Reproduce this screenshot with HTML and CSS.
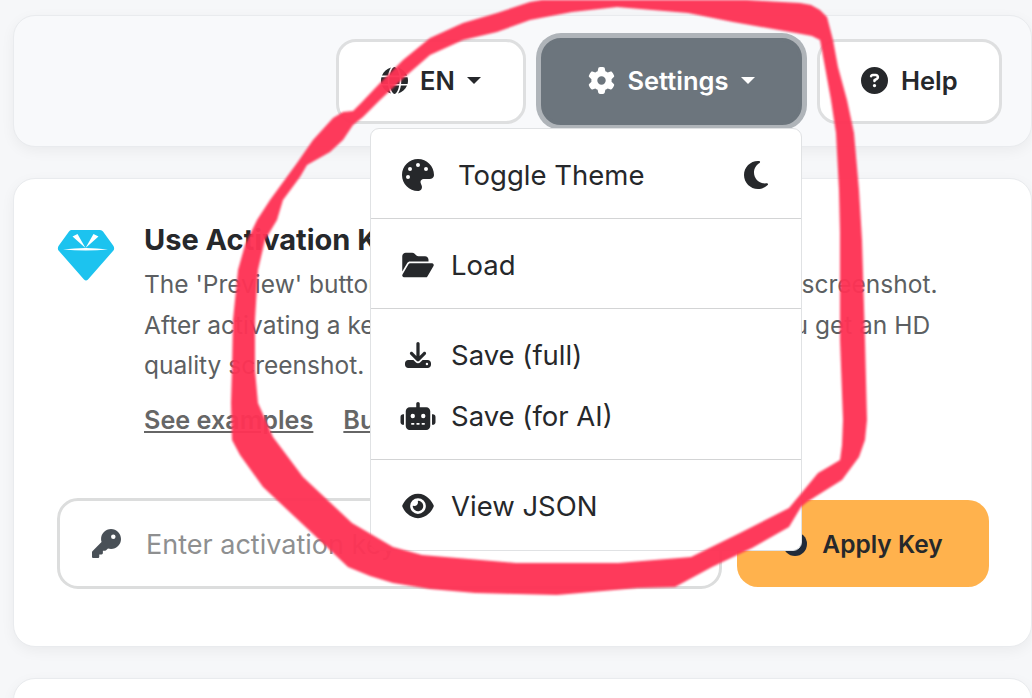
FILE: index.html
```html
<!DOCTYPE html>
<html lang="en">
<head>
<meta charset="utf-8">
<title>Settings</title>
<link rel="stylesheet" href="styles.css">
</head>
<body>
<main class="page">
  <header class="card toolbar">
    <button class="btn">
      <svg class="ico" viewBox="0 0 512 512"><path d="M352 256c0 22.2-1.2 43.6-3.3 64H163.3c-2.2-20.4-3.3-41.8-3.3-64s1.2-43.6 3.3-64H348.7c2.2 20.4 3.3 41.8 3.3 64zm28.8-64H503.9c5.3 20.5 8.1 41.9 8.1 64s-2.8 43.5-8.1 64H380.8c2.1-20.6 3.2-42 3.2-64s-1.1-43.4-3.2-64zm112.6-32H376.7c-10-63.9-29.8-117.4-55.3-151.6c78.3 20.7 142 77.5 171.9 151.6zm-149.1 0H167.7c6.1-36.4 15.5-68.6 27-94.7c10.5-23.6 22.2-40.7 33.5-51.5C239.4 3.2 248.7 0 256 0s16.6 3.2 27.8 13.8c11.3 10.8 23 27.9 33.5 51.5c11.6 26 20.9 58.2 27 94.7zm-209 0H18.6C48.6 85.9 112.2 29.1 190.6 8.4C165.1 42.6 145.3 96.1 135.3 160zM8.1 192H131.2c-2.1 20.6-3.2 42-3.2 64s1.1 43.4 3.2 64H8.1C2.8 299.5 0 278.1 0 256s2.8-43.5 8.1-64zM194.7 446.6c-11.6-26-20.9-58.2-27-94.6H344.3c-6.1 36.4-15.5 68.6-27 94.6c-10.5 23.6-22.2 40.7-33.5 51.5C272.6 508.8 263.3 512 256 512s-16.6-3.2-27.8-13.8c-11.3-10.8-23-27.9-33.5-51.5zM135.3 352c10 63.9 29.8 117.4 55.3 151.6C112.2 482.9 48.6 426.1 18.6 352H135.3zm358.1 0c-30 74.1-93.6 130.9-171.9 151.6c25.5-34.2 45.2-87.7 55.3-151.6H493.4z"/></svg>
      <span>EN</span><i class="caret"></i>
    </button>
    <div class="menu-wrap">
      <button class="btn btn-active">
        <svg class="ico" viewBox="0 0 512 512"><path d="M495.9 166.6c3.2 8.7 .5 18.4-6.4 24.6l-43.3 39.4c1.1 8.3 1.7 16.8 1.7 25.4s-.6 17.1-1.7 25.4l43.3 39.4c6.9 6.2 9.6 15.9 6.4 24.6c-4.4 11.9-9.7 23.3-15.8 34.3l-4.7 8.1c-6.6 11-14 21.4-22.1 31.2c-5.9 7.2-15.7 9.6-24.5 6.8l-55.7-17.7c-13.4 10.3-28.2 18.9-44 25.4l-12.5 57.1c-2 9.1-9 16.3-18.2 17.8c-13.8 2.3-28 3.5-42.5 3.5s-28.7-1.2-42.5-3.5c-9.2-1.5-16.2-8.7-18.2-17.8l-12.5-57.1c-15.8-6.5-30.6-15.1-44-25.4L83.1 425.9c-8.8 2.8-18.6 .3-24.5-6.8c-8.1-9.8-15.5-20.2-22.1-31.2l-4.7-8.1c-6.1-11-11.4-22.4-15.8-34.3c-3.2-8.7-.5-18.4 6.4-24.6l43.3-39.4C64.6 273.1 64 264.6 64 256s.6-17.1 1.7-25.4L22.4 191.2c-6.9-6.2-9.6-15.9-6.4-24.6c4.4-11.9 9.7-23.3 15.8-34.3l4.7-8.1c6.6-11 14-21.4 22.1-31.2c5.9-7.2 15.7-9.6 24.5-6.8l55.7 17.7c13.4-10.3 28.2-18.9 44-25.4l12.5-57.1c2-9.1 9-16.3 18.2-17.8C227.3 1.2 241.5 0 256 0s28.7 1.2 42.5 3.5c9.2 1.5 16.2 8.7 18.2 17.8l12.5 57.1c15.8 6.5 30.6 15.1 44 25.4l55.7-17.7c8.8-2.8 18.6-.3 24.5 6.8c8.1 9.8 15.5 20.2 22.1 31.2l4.7 8.1c6.1 11 11.4 22.4 15.8 34.3zM256 336a80 80 0 1 0 0-160 80 80 0 1 0 0 160z"/></svg>
        <span>Settings</span><i class="caret"></i>
      </button>
      <nav class="menu">
        <a class="item item-theme">
          <svg class="mi" viewBox="0 0 512 512"><path d="M512 256c0 .9 0 1.8 0 2.7c-.4 36.5-33.6 61.3-70.1 61.3H344c-26.5 0-48 21.5-48 48c0 3.4 .4 6.7 1 9.9c2.1 10.2 6.5 20 10.8 29.9c6.1 13.8 12.1 27.5 12.1 42c0 31.8-21.6 60.7-53.4 62c-3.5 .1-7 .2-10.6 .2C114.6 512 0 397.4 0 256S114.6 0 256 0S512 114.6 512 256zM128 288a32 32 0 1 0 -64 0 32 32 0 1 0 64 0zm0-96a32 32 0 1 0 0-64 32 32 0 1 0 0 64zM288 96a32 32 0 1 0 -64 0 32 32 0 1 0 64 0zm96 96a32 32 0 1 0 0-64 32 32 0 1 0 0 64z"/></svg>
          <span class="grow">Toggle Theme</span>
          <svg class="moon" viewBox="0 0 384 512"><path d="M223.5 32C100 32 0 132.3 0 256S100 480 223.5 480c60.6 0 115.5-24.2 155.8-63.4c5-4.9 6.3-12.5 3.1-18.7s-10.1-9.7-17-8.5c-9.8 1.7-19.8 2.6-30.1 2.6c-96.9 0-175.5-78.8-175.5-176c0-65.8 36-123.1 89.3-153.3c6.1-3.5 9.2-10.5 7.7-17.3s-7.3-11.9-14.3-12.5c-6.3-.5-12.6-.8-19-.8z"/></svg>
        </a>
        <hr class="rule">
        <a class="item">
          <svg class="mi" viewBox="0 0 576 512"><path d="M88.7 223.8L0 375.8V96C0 60.7 28.7 32 64 32H181.5c17 0 33.3 6.7 45.3 18.7l26.5 26.5c12 12 28.3 18.7 45.3 18.7H416c35.3 0 64 28.7 64 64v32H144c-22.8 0-43.8 12.1-55.3 31.8zm27.6 16.1C122.1 230 132.6 224 144 224H544c11.5 0 22 6.1 27.7 16.1s5.7 22.2-.1 32.1l-112 192C453.9 474 443.4 480 432 480H32c-11.5 0-22-6.1-27.7-16.1s-5.7-22.2 .1-32.1l112-192z"/></svg>
          <span>Load</span>
        </a>
        <hr class="rule">
        <a class="item">
          <svg class="mi mi-sm" viewBox="0 0 512 512"><path d="M288 32c0-17.7-14.3-32-32-32s-32 14.3-32 32V274.7l-73.4-73.4c-12.5-12.5-32.8-12.5-45.3 0s-12.5 32.8 0 45.3l128 128c12.5 12.5 32.8 12.5 45.3 0l128-128c12.5-12.5 12.5-32.8 0-45.3s-32.8-12.5-45.3 0L288 274.7V32zM64 352c-35.3 0-64 28.7-64 64v32c0 35.3 28.7 64 64 64H448c35.3 0 64-28.7 64-64V416c0-35.3-28.7-64-64-64H346.5l-45.3 45.3c-25 25-65.5 25-90.5 0L165.5 352H64zm368 56a24 24 0 1 1 0 48 24 24 0 1 1 0-48z"/></svg>
          <span>Save (full)</span>
        </a>
        <a class="item">
          <svg class="mi" viewBox="0 0 640 512"><path d="M320 0c17.7 0 32 14.3 32 32V96H472c39.8 0 72 32.2 72 72V440c0 39.8-32.2 72-72 72H168c-39.8 0-72-32.2-72-72V168c0-39.8 32.2-72 72-72H288V32c0-17.7 14.3-32 32-32zM208 384c-8.8 0-16 7.2-16 16s7.2 16 16 16h32c8.8 0 16-7.2 16-16s-7.2-16-16-16H208zm96 0c-8.8 0-16 7.2-16 16s7.2 16 16 16h32c8.8 0 16-7.2 16-16s-7.2-16-16-16H304zm96 0c-8.8 0-16 7.2-16 16s7.2 16 16 16h32c8.8 0 16-7.2 16-16s-7.2-16-16-16H400zM264 256a40 40 0 1 0 -80 0 40 40 0 1 0 80 0zm152 40a40 40 0 1 0 0-80 40 40 0 1 0 0 80zM48 224H64V416H48c-26.5 0-48-21.5-48-48V272c0-26.5 21.5-48 48-48zm544 0c26.5 0 48 21.5 48 48v96c0 26.5-21.5 48-48 48H576V224h16z"/></svg>
          <span>Save (for AI)</span>
        </a>
        <hr class="rule">
        <a class="item">
          <svg class="mi" viewBox="0 0 576 512"><path d="M288 32c-80.8 0-145.5 36.8-192.6 80.6C48.6 156 17.3 208 2.5 243.7c-3.3 7.9-3.3 16.7 0 24.6C17.3 304 48.6 356 95.4 399.4C142.5 443.2 207.2 480 288 480s145.5-36.8 192.6-80.6c46.8-43.5 78.1-95.4 93-131.1c3.3-7.9 3.3-16.7 0-24.6c-14.9-35.7-46.2-87.7-93-131.1C433.5 68.8 368.8 32 288 32zM144 256a144 144 0 1 1 288 0 144 144 0 1 1 -288 0zm144-64c0 35.3-28.7 64-64 64c-7.1 0-13.9-1.2-20.3-3.3c-5.5-1.8-11.9 1.6-11.7 7.4c.3 6.9 1.3 13.8 3.2 20.7c13.7 51.2 66.4 81.6 117.6 67.9s81.6-66.4 67.9-117.6c-11.1-41.5-47.8-69.4-88.6-71.1c-5.8-.2-9.2 6.1-7.4 11.7c2.1 6.4 3.3 13.2 3.3 20.3z"/></svg>
          <span>View JSON</span>
        </a>
      </nav>
    </div>
    <button class="btn">
      <svg class="ico" viewBox="0 0 512 512"><path d="M256 512A256 256 0 1 0 256 0a256 256 0 1 0 0 512zM169.8 165.3c7.9-22.3 29.1-37.3 52.8-37.3h58.3c34.9 0 63.1 28.3 63.1 63.1c0 22.6-12.1 43.5-31.7 54.8L280 264.4c-.2 13-10.9 23.6-24 23.6c-13.3 0-24-10.7-24-24V250.5c0-8.6 4.6-16.5 12.1-20.8l44.3-25.4c4.7-2.7 7.6-7.7 7.6-13.1c0-8.4-6.8-15.1-15.1-15.1H222.6c-3.4 0-6.4 2.1-7.5 5.3l-.4 1.2c-4.4 12.5-18.2 19-30.6 14.6s-19-18.2-14.6-30.6l.4-1.2zM224 352a32 32 0 1 1 64 0 32 32 0 1 1 -64 0z"/></svg>
      <span>Help</span>
    </button>
  </header>

  <section class="card key-card">
    <div class="intro">
      <svg class="gem" viewBox="0 0 58 52">
        <path d="M14 1H43Q45 1 46 2.500L56.500 17Q58 20 56 22L31 50.500Q29 52.500 27 50.500L2 22Q0 20 1.500 17L12 2.500Q13 1 14 1Z" fill="#1cc3ef"/>
        <path d="M6 20.500Q29 17.500 51 20.500Q29 22.500 6 20.500ZM15.500 7.500L20.500 5L28.500 19ZM36.500 5L41.500 7.500L28.500 19Z" fill="#fff"/>
      </svg>
      <div class="intro-text">
        <h2 class="title">Use Activation Key</h2>
        <p class="desc">The 'Preview' button will only show you a low-resolution screenshot.<br>After activating a key, and using the 'Preview' button, you get an HD<br>quality screenshot.</p>
        <div class="links"><a class="link">See examples</a><a class="link">Buy a key</a></div>
      </div>
    </div>
    <form class="key-form">
      <label class="field">
        <svg class="key" viewBox="0 0 512 512"><path d="M336 352c97.200 0 176-78.800 176-176S433.200 0 336 0S160 78.800 160 176c0 18.700 2.900 36.800 8.300 53.700L7 391c-4.500 4.500-7 10.600-7 17v80c0 13.300 10.700 24 24 24h80c13.300 0 24-10.700 24-24V448h40c13.300 0 24-10.700 24-24V384h40c6.400 0 12.500-2.500 17-7l33.300-33.300c16.900 5.400 35 8.300 53.700 8.300zM376 96a40 40 0 1 1 0 80 40 40 0 1 1 0-80z"/></svg>
        <input class="input" type="text" placeholder="Enter activation key">
      </label>
      <button class="apply" type="button">
        <svg class="check" viewBox="0 0 512 512"><circle cx="256" cy="256" r="256"/></svg>
        <span>Apply Key</span>
      </button>
    </form>
  </section>

  <section class="card next-card"></section>
</main>
<svg class="scribble" viewBox="0 0 1032 698" aria-hidden="true">
  <path fill-rule="evenodd" d="M343 112L353 111L363 101L380 83L403 60L430 38L463 23L497 13L530 2L560 -3L640 -6L800 3L811 5L820 10L827 17L833 40L838 67L847 100L854 133L859 190L862 240L865 340L867 420L865 440L859 457L842 480L818 495L807 502L801 507L789 527L752 548L712 567L675 587L638 588L557 595L475 593L430 589L393 583L370 576L348 567L330 550L312 533L263 487L240 455L232 440L231 403L232 370L233 320L238 270L245 245L257 220L270 200L297 163L313 140L333 118Z M363 117L380 100L407 75L430 55L463 40L497 32L530 20L572 12L617 7L688 13L733 22L796 33L812 36L820 40L825 67L831 100L836 133L839 190L840 233L840 340L843 420L842 445L840 460L830 466L818 473L804 490L789 508L740 533L691 557L618 563L516 563L422 555L393 547L352 523L303 477L273 437L258 403L255 370L255 320L258 270L265 240L277 220L283 200L300 177L307 165L330 152L343 140L353 125Z"/>
</svg>
</body>
</html>
```
FILE: styles.css
```css
* { box-sizing: border-box; }
html, body { margin: 0; height: 698px; overflow: hidden; }
body { position: relative; background: #f6f7f9; font-family: Inter, "Liberation Sans", sans-serif; color: #26282b; }

.page { display: flex; flex-direction: column; gap: 31px; padding: 15px 0 0 13px; }
.card { background: #fff; border: 1px solid #e9ebee; border-radius: 22px; box-shadow: 0 4px 14px rgba(0, 0, 0, .05); }

.toolbar { display: flex; justify-content: flex-end; align-items: center; gap: 15px; height: 132px; padding-right: 29px; background: #f8f9fb; }
.btn { display: flex; align-items: center; justify-content: center; gap: 12.500px; height: 85px; padding: 0 0 1px; background: #fff; border: 3px solid #dedfe0; border-radius: 20px; font: 600 25.500px Inter, sans-serif; color: #26282b; }
.toolbar > .btn:first-child { width: 190px; }
.toolbar > .btn:last-child { width: 185px; }
.btn-active { width: 261px; height: 87px; background: #6c757d; border-color: #6c757d; color: #fff; box-shadow: 0 0 0 5px #afb4b9; }
.ico { width: 27px; height: 27px; fill: currentColor; }
.caret { width: 0; height: 0; border: 7.500px solid transparent; border-top-color: currentColor; border-bottom: 0; }

.menu-wrap { position: relative; }
.menu { position: absolute; top: 90px; right: 0; z-index: 5; width: 432px; height: 423px; padding: 16px 0 0; background: #fff; border: 1px solid #e0e2e4; border-radius: 9px; font-size: 27.500px; }
.item { display: flex; align-items: center; gap: 15px; height: 61px; padding: 0 32px 0 29px; color: #26282b; }
.mi { width: 36px; height: 28px; flex: none; fill: #26282b; }
.mi-sm { height: 26px; }
.item-theme { gap: 22px; }
.item-theme .mi { height: 32px; }
.grow { flex: 1; }
.moon { width: 26px; height: 32px; fill: #26282b; }
.rule { height: 1px; margin: 12px 0 16px; border: 0; background: #d3d4d5; }

.key-card { height: 469px; padding: 50px 42px 0 43px; }
.intro { display: flex; gap: 29px; }
.gem { width: 58px; height: 52px; flex: none; }
.intro-text { flex: 1; margin-top: -8px; }
.title { margin: 0; font-size: 29px; font-weight: 700; line-height: 38px; color: #26282b; }
.desc { margin: 5px 0 0; font-size: 24.500px; line-height: 40.500px; color: #5c5f62; }
.links { display: flex; gap: 30px; margin-top: 14px; }
.link { font-size: 25.200px; font-weight: 600; line-height: 40px; color: #666; text-decoration: underline; }

.key-form { display: flex; gap: 15px; align-items: center; margin-top: 58px; }
.field { flex: none; display: flex; align-items: center; gap: 25px; width: 665px; height: 91px; padding: 0 32px; background: #fff; border: 3px solid #dcdddd; border-radius: 21px; }
.key { width: 29px; height: 29px; flex: none; fill: #495057; }
.input { flex: 1; min-width: 0; border: 0; outline: 0; padding: 2px 0 0; background: transparent; font: 27px Inter, sans-serif; color: #26282b; }
.input::placeholder { color: #8e8f90; opacity: 1; }
.apply { display: flex; align-items: center; justify-content: center; gap: 15px; width: 253px; height: 87px; padding: 2px 0 0; border: 0; border-radius: 21px; background: #ffb24d; font: 600 24.500px Inter, sans-serif; color: #26282b; }
.check { width: 24px; height: 24px; fill: #212b3a; }

.next-card { height: 200px; }

.scribble { position: absolute; left: 0; top: 0; z-index: 10; width: 1032px; height: 698px; pointer-events: none; fill: #fe3355; opacity: .96; filter: blur(.9px); }
```
